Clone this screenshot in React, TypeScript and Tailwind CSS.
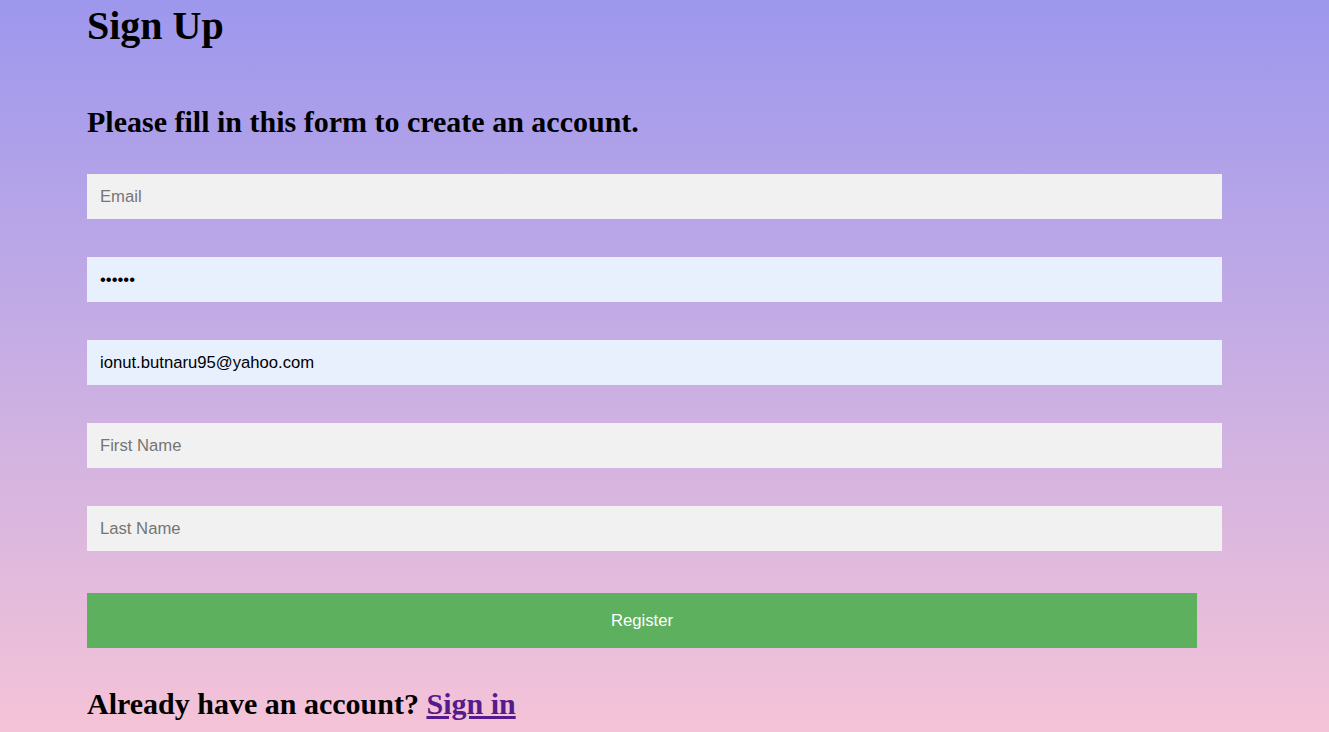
import React from "react";

const fields = [
  { placeholder: "Email", value: "", type: "text", filled: false },
  { placeholder: "Password", value: "secret", type: "password", filled: true },
  { placeholder: "Username", value: "ionut.butnaru95@yahoo.com", type: "text", filled: true },
  { placeholder: "First Name", value: "", type: "text", filled: false },
  { placeholder: "Last Name", value: "", type: "text", filled: false },
];

export default function App() {
  return (
    <div className="min-h-screen w-full bg-gradient-to-b from-[#9d97ed] to-[#f5c3d7] font-['Liberation_Serif',serif] text-black">
      <div className="pl-[87px] pt-[3px] pb-[10px]">
        <h1 className="text-[40px] leading-[46px] font-bold">Sign Up</h1>
        <h2 className="mt-[56px] text-[30px] leading-[34px] font-bold">Please fill in this form to create an account.</h2>

        <form className="mt-[35px] flex flex-col gap-[38px]" onSubmit={(e) => e.preventDefault()}>
          {fields.map((f) => (
            <input
              key={f.placeholder}
              type={f.type}
              placeholder={f.placeholder}
              defaultValue={f.value}
              className={`h-[45px] w-[1135px] px-[13px] font-['Liberation_Sans',Arial,sans-serif] text-[16.67px] text-black outline-none placeholder:text-[#757575] ${
                f.filled ? "bg-[#e8f0fe]" : "bg-[#f1f1f1]"
              }`}
            />
          ))}
          <button
            type="submit"
            className="mt-[4px] h-[55px] w-[1110px] bg-[#5cb05e] font-['Liberation_Sans',Arial,sans-serif] text-[16.67px] text-white"
          >
            Register
          </button>
        </form>

        <h2 className="mt-[39px] text-[30px] leading-[34px] font-bold">
          Already have an account?{" "}
          <a href="#" className="text-[#551a8b] underline">
            Sign in
          </a>
        </h2>
      </div>
    </div>
  );
}
